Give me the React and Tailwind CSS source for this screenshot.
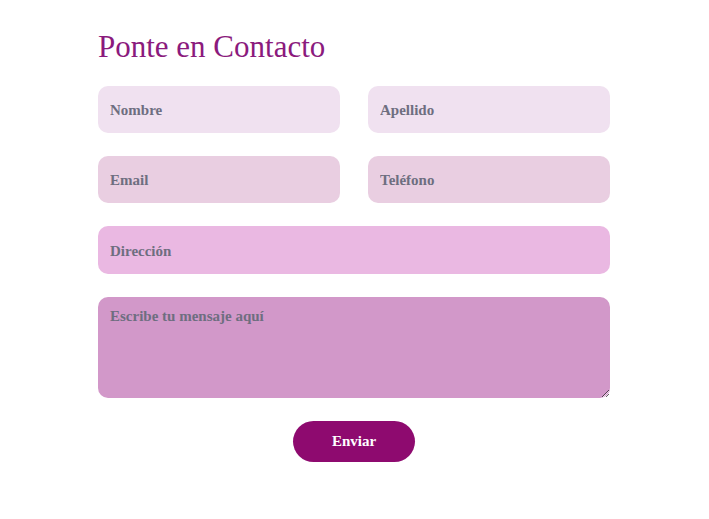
export default function App() {
  const field =
    'w-full h-full rounded-[10px] px-3 pt-[2px] text-[15px] font-bold text-[#4b5563] placeholder:text-[#6e6e80] outline-none border-0';

  return (
    <div className="min-h-[519px] bg-white" style={{ fontFamily: '"Liberation Serif", "Times New Roman", serif' }}>
      <form className="ml-[98px] w-[512px] pt-[29px]" onSubmit={(e) => e.preventDefault()}>
        <h2 className="text-[31px] leading-[36px] text-[#8b1a7d] font-normal">Ponte en Contacto</h2>

        <div className="mt-[21px] flex flex-col gap-[23px]">
          <div className="grid grid-cols-2 gap-[28px] h-[47px]">
            <input className={`${field} bg-[#f0e1f0]`} placeholder="Nombre" />
            <input className={`${field} bg-[#f0e1f0]`} placeholder="Apellido" />
          </div>
          <div className="grid grid-cols-2 gap-[28px] h-[47px]">
            <input className={`${field} bg-[#e9cee1]`} placeholder="Email" />
            <input className={`${field} bg-[#e9cee1]`} placeholder="Teléfono" />
          </div>
          <div className="h-[48px]">
            <input className={`${field} bg-[#eab8e2]`} placeholder="Dirección" />
          </div>
          <textarea
            className="w-full h-[101px] rounded-[10px] px-3 py-[8px] text-[15px] font-bold text-[#4b5563] placeholder:text-[#6e6e80] outline-none border-0 bg-[#d298c9] resize-y block"
            placeholder="Escribe tu mensaje aquí"
          />
        </div>

        <div className="mt-[23px] flex justify-center">
          <button type="submit" className="w-[122px] h-[41px] rounded-full bg-[#8e0a6f] text-white text-[15px] font-bold">
            Enviar
          </button>
        </div>
      </form>
    </div>
  );
}
